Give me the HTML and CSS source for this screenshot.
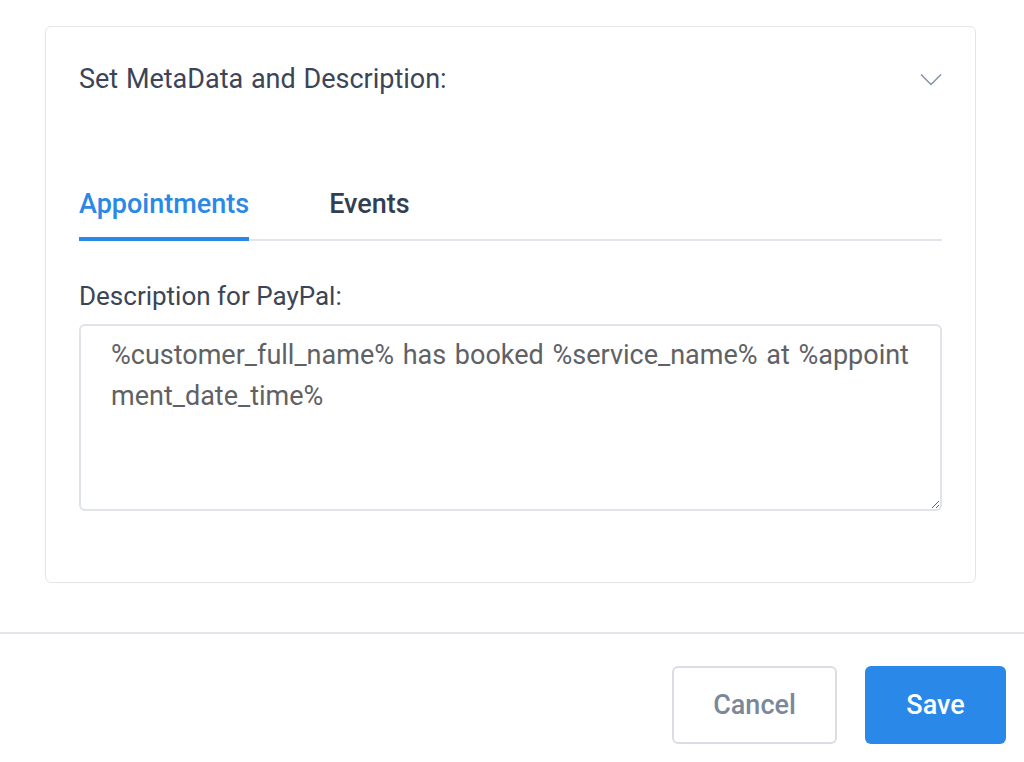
FILE: index.html
```html
<!DOCTYPE html>
<html lang="en">
<head>
  <meta charset="UTF-8" />
  <title>PayPal Settings</title>
  <link rel="stylesheet" href="styles.css">
</head>
<body>
  <div class="content">
    <div class="card">
      <div class="card-head">
        <span class="card-title">Set MetaData and Description:</span>
        <svg class="chevron" width="22" height="13" viewBox="0 0 22 13">
          <path d="M1 1.5 L11 11.5 L21 1.5" fill="none" stroke="#8592a6" stroke-width="1.5" />
        </svg>
      </div>

      <div class="tabs">
        <div class="tab active">Appointments</div>
        <div class="tab">Events</div>
      </div>

      <label class="field-label" for="desc">Description for PayPal:</label>
      <textarea id="desc" class="field">%customer_full_name% has booked %service_name% at %appointment_date_time%</textarea>
    </div>
  </div>

  <div class="footer">
    <button class="btn btn-cancel">Cancel</button>
    <button class="btn btn-save">Save</button>
  </div>
</body>
</html>
```

FILE: styles.css
```css
body {
  margin: 0;
  background: #fff;
  font-family: Roboto, "Liberation Sans", Arial, sans-serif;
  color: #354052;
}

.content {
  padding: 26px 48px 49px 45px;
}

.card {
  border: 1px solid #e2e5ea;
  border-radius: 6px;
  padding: 34px 33px 71px 33px;
}

.card-head {
  display: flex;
  align-items: center;
  justify-content: space-between;
  height: 36px;
}

.card-title {
  font-size: 27px;
  line-height: 36px;
  word-spacing: 1px;
  color: #3b4557;
}

.tabs {
  display: flex;
  gap: 80px;
  margin-top: 91px;
  border-bottom: 2px solid #e2e5ea;
}

.tab {
  font-size: 27px;
  line-height: 32px;
  font-weight: 500;
  color: #333e50;
  padding-bottom: 17px;
  margin-bottom: -2px;
  border-bottom: 4px solid transparent;
}

.tab.active {
  color: #2a88e6;
  border-bottom-color: #2a88e6;
}

.field-label {
  display: block;
  font-size: 26px;
  line-height: 30px;
  color: #3b4557;
  margin-top: 40px;
  margin-bottom: 13px;
}

.field {
  display: block;
  box-sizing: border-box;
  width: 863px;
  height: 187px;
  border: 2px solid #e0e3e8;
  border-radius: 6px;
  padding: 9px 24px 8px 30px;
  font-family: Roboto, "Liberation Sans", Arial, sans-serif;
  font-size: 27px;
  line-height: 41px;
  word-spacing: 2px;
  color: #5f6165;
  word-break: break-all;
  resize: vertical;
  outline: none;
}

.footer {
  border-top: 2px solid #e2e5ea;
  display: flex;
  justify-content: flex-end;
  gap: 28px;
  padding: 32px 18px 0 0;
}

.btn {
  height: 78px;
  border-radius: 6px;
  font-family: Roboto, "Liberation Sans", Arial, sans-serif;
  font-size: 27px;
  font-weight: 500;
  cursor: pointer;
}

.btn-cancel {
  width: 165px;
  background: #fff;
  border: 2px solid #dadde3;
  color: #7a889a;
}

.btn-save {
  width: 141px;
  background: #2a88e8;
  border: none;
  color: #fff;
}
```
